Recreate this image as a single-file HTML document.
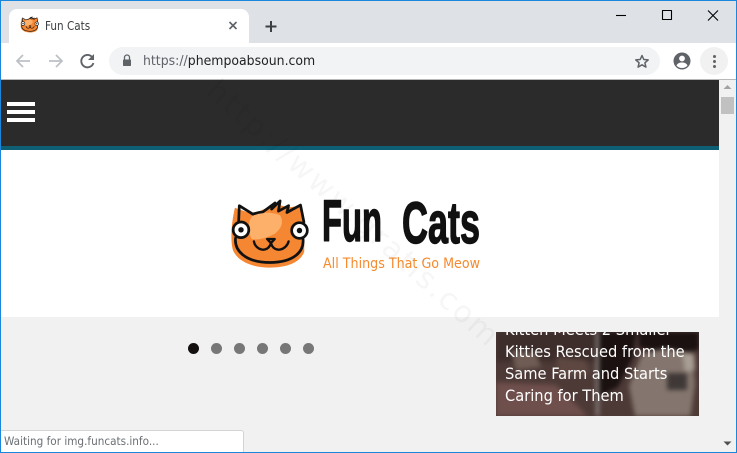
<!DOCTYPE html>
<html><head><meta charset="utf-8"><style>
html,body{margin:0;padding:0;width:737px;height:453px;overflow:hidden;background:#f1f1f1;font-family:"Liberation Sans",sans-serif}
.a{position:absolute}
</style></head><body>
<div class="a" style="left:0;top:0;width:737px;height:453px;overflow:hidden">
<div class="a" style="left:0;top:0;width:737px;height:43px;background:#dee1e6"></div>
<div class="a" style="left:9px;top:9px;width:240px;height:34px;background:#fff;border-radius:8px 8px 0 0"></div>
<div class="a" style="left:45px;top:19px;font-size:12px;line-height:15px;color:#3c4043;font-family:'DejaVu Sans',sans-serif;transform-origin:0 0;transform:scaleX(.87);white-space:nowrap">Fun Cats</div>
<div class="a" style="left:0;top:43px;width:737px;height:36px;background:#fff"></div>
<div class="a" style="left:109px;top:47px;width:551px;height:28px;border-radius:14px;background:#f1f3f4"></div>
<div class="a" style="left:143px;top:52px;font-size:13.5px;line-height:18px;font-family:'DejaVu Sans',sans-serif;color:#202124;transform-origin:0 0;transform:scaleX(.925);white-space:nowrap"><span style="color:#5f6368">https://</span>phempoabsoun.com</div>
<div class="a" style="left:1px;top:79px;width:735px;height:1px;background:#b8b8b8"></div>
<div class="a" style="left:1px;top:80px;width:718px;height:66px;background:#2b2b2b"></div>
<div class="a" style="left:1px;top:146px;width:718px;height:4px;background:#0e5f74"></div>
<div class="a" style="left:1px;top:150px;width:718px;height:167px;background:#fff"></div>
<div class="a" style="left:7px;top:102px;width:28px;height:4px;background:#fff"></div>
<div class="a" style="left:7px;top:110px;width:28px;height:4px;background:#fff"></div>
<div class="a" style="left:7px;top:118px;width:28px;height:4px;background:#fff"></div>
<div class="a" style="left:719px;top:80px;width:17px;height:372px;background:#f1f1f1"></div>
<div class="a" style="left:721px;top:97px;width:13px;height:17px;background:#c1c1c1"></div>
<svg class="a" style="left:0;top:0" width="737" height="453" viewBox="0 0 737 453">
<defs>
<g id="cat">
<path d="M32 36C22 80 18 130 26 160C40 195 85 212 135 212C185 212 225 197 236 165L236 80L226 30L190 35L150 25L85 55z" fill="#f58632"/>
<path d="M85 58C105 48 140 48 165 58C175 75 172 95 150 112C125 125 100 132 82 128C68 105 70 75 85 58z" fill="#fdb069"/>
<path d="M34 125C30 160 60 197 135 197C205 197 238 165 232 125M43 80L45 30L85 55C95 51 105 49 115 48L150 22L140 40L165 16L160 46L190 30L185 50L225 28L235 78" fill="none" stroke="#111" stroke-width="8" stroke-linejoin="round" stroke-linecap="round"/>
<circle cx="50" cy="101" r="23" fill="#fff" stroke="#111" stroke-width="8"/>
<circle cx="222" cy="103" r="23" fill="#fff" stroke="#111" stroke-width="8"/>
<circle cx="50" cy="101" r="8" fill="#111"/><circle cx="222" cy="103" r="8" fill="#111"/>
<path d="M88 135C92 160 128 172 138 140C148 172 184 160 190 135M127 128H149L138 140z" fill="none" stroke="#111" stroke-width="7" stroke-linecap="round" stroke-linejoin="round"/>
</g>
</defs>
<use href="#cat" transform="translate(19,15.500) scale(.08)"/>
<g fill="none" stroke-linecap="round" stroke-linejoin="round">
<path d="M229.500 22l7 7M236.500 22l-7 7" stroke="#5f6368" stroke-width="1.600" stroke-linecap="butt"/>
<path d="M271 21v11M265.500 26.500h11" stroke="#3c4043" stroke-width="2" stroke-linecap="butt"/>
<path d="M30 61H17M23 55l-6 6 6 6" stroke="#bdc1c6" stroke-width="1.800" stroke-linecap="butt" stroke-linejoin="miter"/>
<path d="M49 61h13M56 55l6 6-6 6" stroke="#bdc1c6" stroke-width="1.800" stroke-linecap="butt" stroke-linejoin="miter"/>
<path d="M92.500 57.500A6.200 6.200 0 1 0 93.400 63" stroke="#5f6368" stroke-width="1.900" stroke-linecap="butt"/>
<path d="M94 54v6h-6z" fill="#5f6368"/>
<path d="M124.500 60v-2.500a2.500 2.500 0 0 1 5 0V60" stroke="#5f6368" stroke-width="1.300"/>
<rect x="123" y="59.500" width="8" height="6.500" rx=".8" fill="#5f6368"/>
<path d="M642 55.500l1.800 4 4.400.4-3.300 2.900 1 4.300-3.900-2.300-3.900 2.300 1-4.300-3.300-2.900 4.400-.4z" stroke="#5f6368" stroke-width="1.500"/>
<circle cx="682" cy="61" r="8.500" fill="#5f6368"/>
<circle cx="682" cy="58.500" r="2.900" fill="#fff"/>
<path d="M676.500 65.500c1-2.200 3-3 5.500-3s4.500.8 5.500 3c-1.300 1.600-3.300 2.500-5.500 2.500s-4.200-.9-5.500-2.500z" fill="#fff"/>
<circle cx="714" cy="61" r="14" fill="#f1f1f1"/>
<circle cx="714.500" cy="56.500" r="1.500" fill="#5f6368"/><circle cx="714.500" cy="61.500" r="1.500" fill="#5f6368"/><circle cx="714.500" cy="66.500" r="1.500" fill="#5f6368"/>
<path d="M616 15.500h10" stroke="#000" stroke-width="1.100" stroke-linecap="butt"/>
<rect x="662.500" y="10.500" width="9" height="9" stroke="#000" stroke-width="1.100"/>
<path d="M708 10.500l10 10M718 10.500l-10 10" stroke="#000" stroke-width="1.100" stroke-linecap="butt"/>
</g>
<path d="M727.500 85l-4 4h8z" fill="#a3a3a3"/>
<path d="M723.500 441.500h8l-4 4z" fill="#505050"/>
<use href="#cat" transform="translate(224,195.500) scale(.3400)"/>
<text x="322" y="241" font-family="'Liberation Sans',sans-serif" font-weight="700" font-size="58" fill="#111" stroke="#111" stroke-width="1.400" stroke-linejoin="round" textLength="60" lengthAdjust="spacingAndGlyphs">Fun</text>
<text x="402" y="243" font-family="'Liberation Sans',sans-serif" font-weight="700" font-size="58" fill="#111" stroke="#111" stroke-width="1.400" stroke-linejoin="round" textLength="78" lengthAdjust="spacingAndGlyphs">Cats</text>
<text x="323" y="268" font-family="'DejaVu Sans',sans-serif" font-size="14" fill="#f58a2e" textLength="157" lengthAdjust="spacingAndGlyphs">All Things That Go Meow</text>
<g fill="#777"><circle cx="193.500" cy="348.500" r="5.500" fill="#141010"/><circle cx="216.500" cy="348.500" r="5.500"/><circle cx="239.500" cy="348.500" r="5.500"/><circle cx="262.500" cy="348.500" r="5.500"/><circle cx="285.500" cy="348.500" r="5.500"/><circle cx="308.500" cy="348.500" r="5.500"/></g>
<text transform="translate(205,93) rotate(42)" font-family="'DejaVu Sans',sans-serif" font-size="30" fill="#000" fill-opacity=".035" textLength="380">http://www.gratis.com</text>
</svg>
<div class="a" style="left:496px;top:332px;width:203px;height:84px;overflow:hidden;background:#4d3a37">
<svg class="a" style="left:0;top:0;filter:blur(2.5px)" width="203" height="84" viewBox="0 0 203 84">
<rect x="-10" y="-10" width="223" height="104" fill="#4d3a37"/>
<rect x="-10" y="-10" width="112" height="40" fill="#3d2e2c"/>
<path d="M-10 50l70 3 42 41H-10z" fill="#6f4f4c"/>
<path d="M102 -10h40l-5 35-15 30-20 10z" fill="#1a1110"/>
<path d="M142 -10h71v26l-30 5-40-5z" fill="#1a1110"/>
<path d="M146 22l24-6 26 6 3 30-6 42h-52l-8-40z" fill="#84766e"/>
<path d="M171 41h20v17h-20z" fill="#3f3836"/>
<path d="M186 20l12 2 1 16-10 2z" fill="#a89e94"/>
<rect x="100" y="-10" width="3" height="104" fill="#8d8580"/>
<path d="M15 18l25 3 5 14-25 3z" fill="#6f5c54"/>
<path d="M60 25l30 3 3 15-30 2z" fill="#5e4741"/>
</svg>
<div class="a" style="left:9px;top:-13px;width:194px;font-family:'DejaVu Sans Condensed','DejaVu Sans',sans-serif;font-size:16.300px;line-height:22px;color:#fff;white-space:nowrap">Kitten Meets 2 Smaller<br>Kitties Rescued from the<br>Same Farm and Starts<br>Caring for Them</div>
</div>
<div class="a" style="left:1px;top:430px;width:243px;height:22px;background:#fff;border:1px solid #d4d4d4;border-left:0;border-bottom:0;border-radius:0 3px 0 0;box-sizing:border-box"></div>
<div class="a" style="left:4px;top:434px;font-family:'DejaVu Sans',sans-serif;font-size:11.500px;line-height:15px;color:#6b6f73;transform-origin:0 0;transform:scaleX(.91);white-space:nowrap">Waiting for img.funcats.info...</div>
<div class="a" style="left:0;top:0;width:737px;height:453px;box-sizing:border-box;border:1px solid #1a86dc;pointer-events:none"></div>
</div>
</body></html>
